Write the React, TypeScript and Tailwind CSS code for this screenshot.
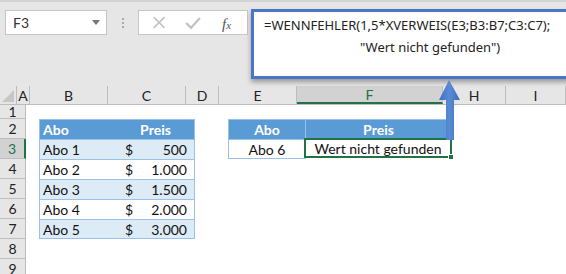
const cols = [
  { key: "A", w: "w-[13px]" },
  { key: "B", w: "w-[78px]" },
  { key: "C", w: "w-[78px]" },
  { key: "D", w: "w-[33px]" },
  { key: "E", w: "w-[78px]" },
  { key: "F", w: "w-[146px]" },
  { key: "H", w: "w-[63px]" },
  { key: "I", w: "w-[60px]" },
];

const rows = [
  { n: 1, h: "h-[14px]" },
  { n: 2, h: "h-[20px]" },
  { n: 3, h: "h-[20px]" },
  { n: 4, h: "h-[20px]" },
  { n: 5, h: "h-[20px]" },
  { n: 6, h: "h-[20px]" },
  { n: 7, h: "h-[20px]" },
  { n: 8, h: "h-[20px]" },
  { n: 9, h: "h-[20px]" },
];

const abos = [
  { name: "Abo 1", price: "500" },
  { name: "Abo 2", price: "1.000" },
  { name: "Abo 3", price: "1.500" },
  { name: "Abo 4", price: "2.000" },
  { name: "Abo 5", price: "3.000" },
];

function FormulaBar() {
  return (
    <div className="h-[86px] bg-[#e6e6e6] border-t-[2px] border-[#d4d4d4] flex items-start pt-[8px] pl-[5px]">
      <div className="w-[102px] h-[25px] bg-white border border-[#c6c6c6] flex items-center justify-between pl-[7px] pr-[6px]">
        <span className="text-[14px] text-[#333]">F3</span>
        <span className="w-0 h-0 border-l-[4px] border-r-[4px] border-t-[5px] border-l-transparent border-r-transparent border-t-[#777]" />
      </div>
      <div className="w-[31px] h-[25px] flex flex-col items-center justify-center gap-[2px]">
        <span className="w-[2px] h-[2px] bg-[#aaa]" />
        <span className="w-[2px] h-[2px] bg-[#aaa]" />
        <span className="w-[2px] h-[2px] bg-[#aaa]" />
      </div>
      <div className="w-[110px] h-[25px] bg-white border border-[#c6c6c6] flex items-center">
        <svg width="110" height="23" viewBox="0 0 110 23">
          <path d="M15 6 L26 17 M26 6 L15 17" stroke="#c4c4c4" strokeWidth="1.6" fill="none" />
          <path d="M48 12 L53 17 L62 7" stroke="#c4c4c4" strokeWidth="2.4" fill="none" />
        </svg>
      </div>
      <span className="absolute left-[222px] top-[13px] text-[15px] italic text-[#555] font-['Liberation_Serif',serif]">
        f<span className="text-[11px]">x</span>
      </span>
    </div>
  );
}

function ColumnHeader() {
  return (
    <div className="flex h-[19px] bg-[#e6e6e6] border-b border-[#bdbdbd]">
      <div className="w-[26px] border-r border-[#bdbdbd] relative">
        <span className="absolute right-[2px] bottom-[2px] w-0 h-0 border-b-[12px] border-l-[12px] border-b-[#c6c6c6] border-l-transparent" />
      </div>
      {cols.map((c) => (
        <div
          key={c.key}
          className={`${c.w} shrink-0 flex items-center justify-center text-[14px] border-r border-[#bdbdbd] ${
            c.key === "F" ? "bg-[#d2d2d2] text-[#217346] border-b-[2px] border-b-[#217346]" : "text-[#222]"
          }`}
        >
          {c.key}
        </div>
      ))}
    </div>
  );
}

function Cell({
  w,
  className = "",
  children,
}: {
  w: string;
  className?: string;
  children?: React.ReactNode;
}) {
  return <div className={`${w} shrink-0 h-full flex items-center ${className}`}>{children}</div>;
}

function SheetRow({ n, h }: { n: number; h: string }) {
  const blueHead = "bg-[#5b9bd5] text-white font-bold";
  const tb = "border-[#9bc2e6]";
  let b: React.ReactNode = null;
  let c: React.ReactNode = null;
  let e: React.ReactNode = null;
  let f: React.ReactNode = null;

  if (n === 2) {
    b = (
      <Cell w="w-[78px]" className={`${blueHead} pl-[3px] border-t border-l ${tb}`}>
        Abo
      </Cell>
    );
    c = (
      <Cell w="w-[78px]" className={`${blueHead} justify-center border-t border-r ${tb}`}>
        Preis
      </Cell>
    );
    e = (
      <Cell w="w-[78px]" className={`${blueHead} justify-center border-t border-l border-r ${tb}`}>
        Abo
      </Cell>
    );
    f = (
      <Cell w="w-[146px]" className={`${blueHead} justify-center border-t border-r ${tb}`}>
        Preis
      </Cell>
    );
  } else if (n >= 3 && n <= 7) {
    const a = abos[n - 3];
    const bg = n % 2 === 1 ? "bg-[#ddebf7]" : "bg-white";
    const last = n === 7 ? "border-b" : "";
    b = (
      <Cell w="w-[78px]" className={`${bg} pl-[3px] border-t border-l ${last} ${tb}`}>
        {a.name}
      </Cell>
    );
    c = (
      <Cell w="w-[78px]" className={`${bg} justify-between pl-[8px] pr-[7px] border-t border-r ${last} ${tb}`}>
        <span>$</span>
        <span>{a.price}</span>
      </Cell>
    );
    if (n === 3) {
      e = (
        <Cell w="w-[78px]" className={`bg-white justify-center border ${tb}`}>
          Abo 6
        </Cell>
      );
      f = (
        <Cell w="w-[148px]" className="bg-white justify-center border-[2px] border-[#217346] relative -ml-[2px] -mt-[1px] h-[21px]">
          Wert nicht gefunden
          <span className="absolute -right-[4px] -bottom-[4px] w-[6px] h-[6px] bg-[#217346] border border-white" />
        </Cell>
      );
    }
  }

  const sel = n === 3;
  return (
    <div className={`flex ${h}`}>
      <div
        className={`w-[26px] shrink-0 flex items-center justify-center text-[14px] border-b ${
          sel
            ? "bg-[#d2d2d2] text-[#217346] border-r-[2px] border-r-[#217346] border-b-[#bdbdbd]"
            : "bg-[#e6e6e6] text-[#222] border-r border-[#bdbdbd]"
        }`}
      >
        {n}
      </div>
      <Cell w="w-[13px]" />
      {b ?? <Cell w="w-[78px]" />}
      {c ?? <Cell w="w-[78px]" />}
      <Cell w="w-[33px]" />
      {e ?? <Cell w="w-[78px]" />}
      {f ?? <Cell w="w-[146px]" />}
    </div>
  );
}

export default function App() {
  return (
    <div className="w-[566px] h-[274px] relative overflow-hidden bg-white font-['Lato','Noto_Sans',sans-serif] text-[14px] text-[#111]">
      <FormulaBar />
      <ColumnHeader />
      {rows.map((r) => (
        <SheetRow key={r.n} n={r.n} h={r.h} />
      ))}

      {/* expanded formula bar */}
      <div className="absolute left-[251px] top-[9px] w-[340px] h-[70px] bg-white border-[3px] border-[#4a76c9] shadow-[0_3px_5px_rgba(0,0,0,0.35)] pl-[10px] pt-[2px] font-['Noto_Sans',sans-serif] text-[13px] leading-[22px] text-[#222]">
        <div>=WENNFEHLER(1,5*XVERWEIS(E3;B3:B7;C3:C7);</div>
        <div className="pl-[96px]">"Wert nicht gefunden")</div>
      </div>

      {/* arrow */}
      <svg className="absolute left-[438px] top-[79px]" width="26" height="64" viewBox="0 0 26 64">
        <defs>
          <linearGradient id="ar" x1="0" x2="1" y1="0" y2="0">
            <stop offset="0" stopColor="#4472c4" />
            <stop offset="0.5" stopColor="#5a8ad6" />
            <stop offset="1" stopColor="#3f6bbb" />
          </linearGradient>
        </defs>
        <path d="M11 1 L22 21 L16 21 L16 61 L8 61 L8 21 L1 21 Z" fill="url(#ar)" />
      </svg>
    </div>
  );
}
